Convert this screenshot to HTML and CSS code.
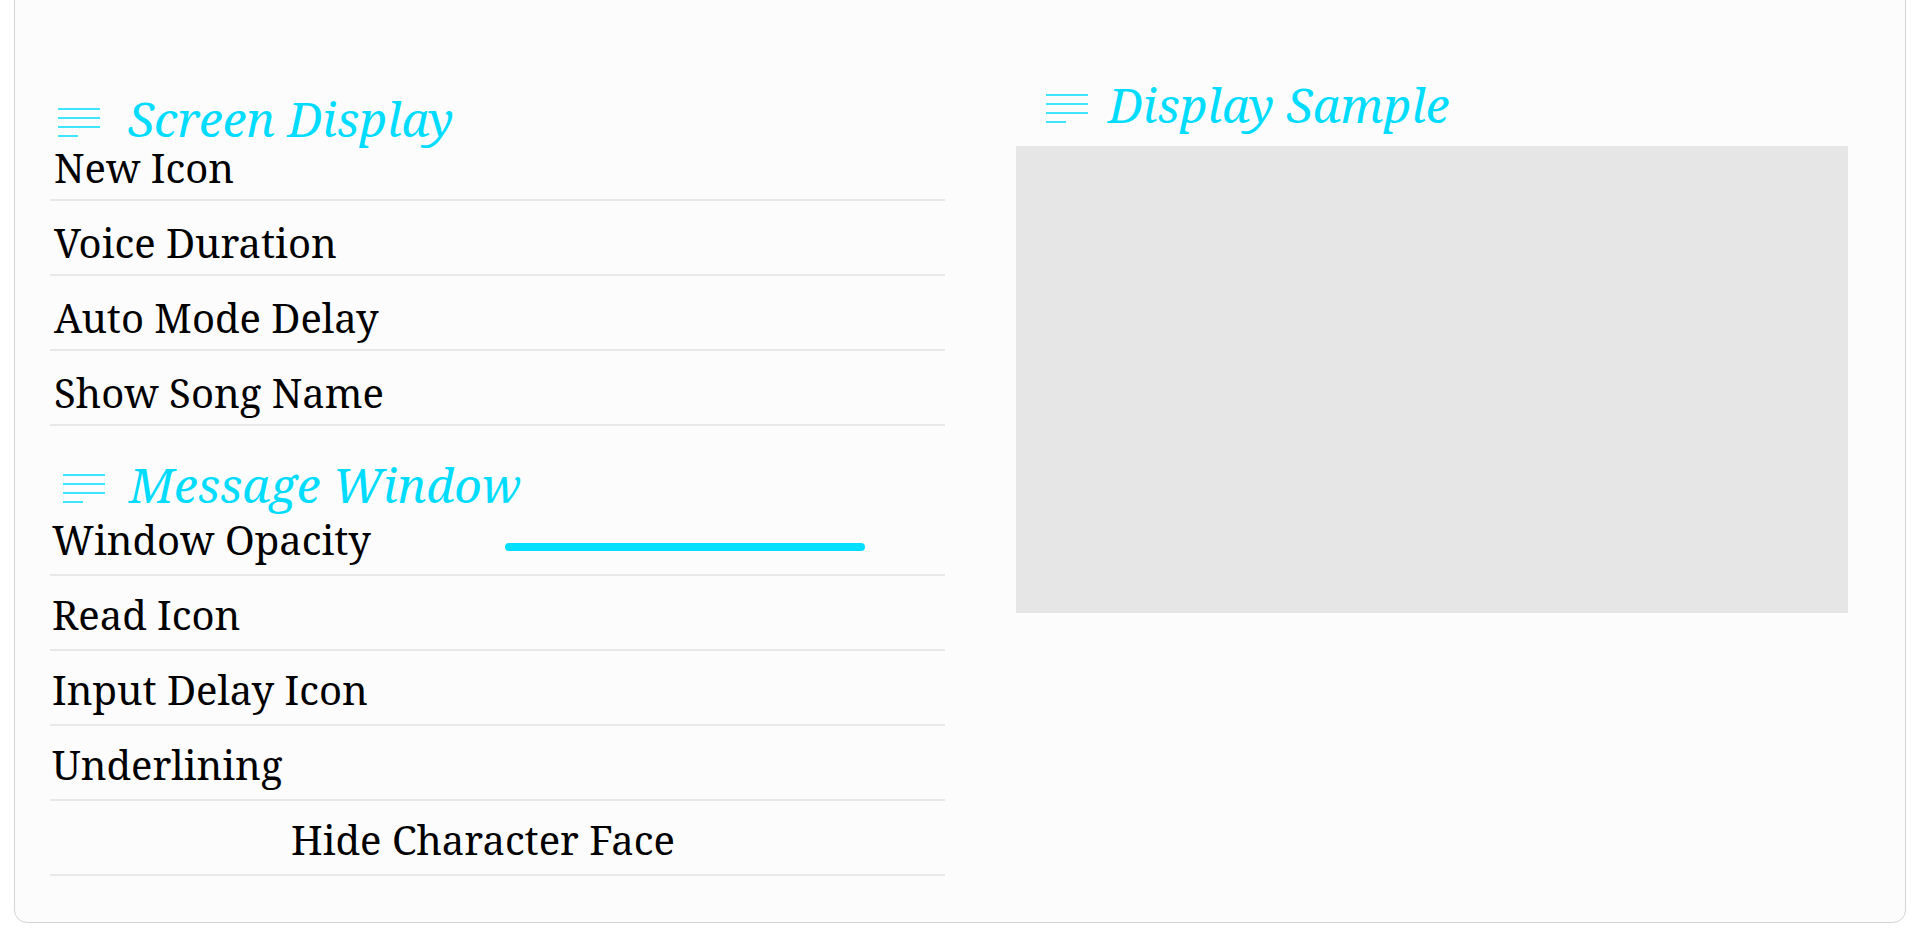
FILE: index.html
```html
<!DOCTYPE html>
<html lang="en">
<head>
<meta charset="utf-8">
<title>Settings - Screen Display</title>
<link rel="stylesheet" href="styles.css">
</head>
<body>
<div class="frame">
  <div class="col col--left">
    <section class="group">
      <h2 class="title title--screen">
        <svg class="title-icon" viewBox="0 0 42 30" width="42" height="30"><path d="M0 2H42M0 11H42M0 20H42M0 29H20"/></svg>
        <span class="title-text">Screen Display</span>
      </h2>
      <div class="rows">
        <div class="row"><span class="label">New Icon</span></div>
        <div class="row"><span class="label">Voice Duration</span></div>
        <div class="row"><span class="label">Auto Mode Delay</span></div>
        <div class="row"><span class="label">Show Song Name</span></div>
      </div>
    </section>
    <section class="group group--msg">
      <h2 class="title title--msg">
        <svg class="title-icon" viewBox="0 0 42 30" width="42" height="30"><path d="M0 2H42M0 11H42M0 20H42M0 29H20"/></svg>
        <span class="title-text">Message Window</span>
      </h2>
      <div class="rows rows--msg">
        <div class="row"><span class="label label--fixed">Window Opacity</span><span class="slider"></span></div>
        <div class="row"><span class="label">Read Icon</span></div>
        <div class="row"><span class="label">Input Delay Icon</span></div>
        <div class="row"><span class="label">Underlining</span></div>
        <div class="row row--center"><span class="label">Hide Character Face</span></div>
      </div>
    </section>
  </div>
  <div class="col col--right">
    <h2 class="title title--sample">
      <svg class="title-icon" viewBox="0 0 42 30" width="42" height="30"><path d="M0 2H42M0 11H42M0 20H42M0 29H20"/></svg>
      <span class="title-text">Display Sample</span>
    </h2>
    <div class="sample"></div>
  </div>
</div>
</body>
</html>
```
FILE: styles.css
```css
html, body {
  margin: 0;
  padding: 0;
  background: #ffffff;
}

body {
  font-family: "Noto Serif", "DejaVu Serif", serif;
  color: #000;
  overflow: hidden;
  height: 938px;
}

.frame {
  box-sizing: border-box;
  width: 1892px;
  margin: -20px 0 0 14px;
  border: 1px solid #d4d4d4;
  border-radius: 13px;
  background: #fcfcfc;
  display: grid;
  grid-template-columns: 895px 832px;
  column-gap: 71px;
  padding: 0 57px 46px 35px;
  align-items: start;
}

.col--left {
  padding-top: 114px;
}

.col--right {
  padding-top: 100px;
}

.title {
  margin: 0;
  display: flex;
  align-items: baseline;
  font-weight: normal;
  font-style: italic;
  font-size: 48px;
  line-height: 1;
  color: #00dcff;
}

.title-icon {
  flex: none;
  fill: none;
  stroke: #00dcff;
  stroke-width: 1.7;
}

.title--screen {
  padding-left: 8px;
  gap: 28px;
  margin-bottom: -17px;
}

.group--msg {
  margin-top: 35px;
}

.title--msg {
  padding-left: 13px;
  gap: 24px;
  margin-bottom: -8px;
}

.title--sample {
  padding-left: 30px;
  gap: 20px;
  margin-bottom: 17px;
}

.row {
  box-sizing: border-box;
  height: 75px;
  border-bottom: 2px solid #e8e8e8;
  padding: 22px 0 0 4px;
  display: flex;
  align-items: flex-start;
}

.rows--msg .row {
  padding-top: 19px;
  padding-left: 2px;
}

.rows--msg .row--center {
  padding-left: 241px;
}

.label {
  font-size: 40px;
  line-height: 40px;
  white-space: nowrap;
}

.label--fixed {
  flex: 0 0 453px;
}

.slider {
  width: 360px;
  height: 8px;
  margin-top: 23px;
  border-radius: 4px;
  background: #00dfff;
}

.sample {
  height: 467px;
  background: #e6e6e6;
}
```
